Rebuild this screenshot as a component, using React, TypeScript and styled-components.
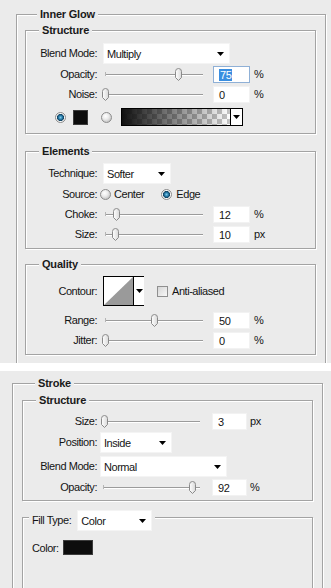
import React from "react";
import styled, { createGlobalStyle } from "styled-components";

const GlobalStyle = createGlobalStyle`
  html, body {
    margin: 0;
    padding: 0;
    background: #fff;
  }
  body {
    font-family: "Liberation Sans", Arial, sans-serif;
    font-size: 11px;
    letter-spacing: -0.45px;
    color: #141414;
  }
`;

const Page = styled.div`
  width: 331px;
  height: 588px;
  overflow: hidden;
  background: #fff;
  display: flex;
  flex-direction: column;
  gap: 8px;
`;

const Panel = styled.div<{ $h: number; $pt: number }>`
  flex: none;
  height: ${({ $h }) => $h}px;
  padding-top: ${({ $pt }) => $pt}px;
  box-sizing: border-box;
  overflow: hidden;
  background: #ebebeb;
`;

const Group = styled.div<{ $m: string; $p: string }>`
  margin: ${({ $m }) => $m};
  padding: ${({ $p }) => $p};
  border: 1px solid #a3a3a3;
  box-shadow: inset 1px 1px 0 #fff, 1px 1px 0 #fff;
`;

const Title = styled.div<{ $ml: number }>`
  width: fit-content;
  height: 14px;
  margin: -8px 0 0 ${({ $ml }) => $ml}px;
  padding: 0 3px;
  background: #ebebeb;
  font-weight: bold;
  line-height: 14px;
  letter-spacing: -0.2px;
  color: #1a1a1a;
`;

const FillLegend = styled.div`
  width: fit-content;
  height: 22px;
  margin: -9px 0 0 6px;
  padding: 0 3px;
  background: #ebebeb;
  display: flex;
  align-items: center;
  gap: 6px;
`;

const Row = styled.div<{ $h: number; $mt?: number; $gap?: number; $pl?: number }>`
  display: flex;
  align-items: center;
  height: ${({ $h }) => $h}px;
  margin-top: ${({ $mt }) => $mt ?? 0}px;
  padding-left: ${({ $pl }) => $pl ?? 0}px;
  gap: ${({ $gap }) => $gap ?? 0}px;
`;

const Label = styled.span<{ $w: number }>`
  flex: none;
  width: ${({ $w }) => $w}px;
  text-align: right;
  white-space: nowrap;
`;

const Select = styled.div<{ $w: number }>`
  flex: none;
  width: ${({ $w }) => $w}px;
  height: 21px;
  box-sizing: border-box;
  padding: 2px 5px 0 3px;
  background: #fff;
  border: 1px solid #f4f4f4;
  display: flex;
  align-items: center;
  justify-content: space-between;
`;

const Field = styled.div<{ $w: number; $focus?: boolean }>`
  flex: none;
  width: ${({ $w }) => $w}px;
  height: 17px;
  box-sizing: border-box;
  padding: 1px 0 0 5px;
  background: #fff;
  border: 1px solid ${({ $focus }) => ($focus ? "#8fb0d6" : "#f2f2f2")};
  line-height: 14px;
`;

const Selected = styled.span`
  background: #3a8ee0;
  color: #fff;
  padding: 0 1px;
`;

const Unit = styled.span<{ $ml: number }>`
  margin-left: ${({ $ml }) => $ml}px;
`;

const SliderBox = styled.div<{ $w: number }>`
  position: relative;
  flex: none;
  width: ${({ $w }) => $w}px;
  height: 16px;
`;

const Track = styled.div<{ $l: number; $w: number }>`
  position: absolute;
  left: ${({ $l }) => $l}px;
  width: ${({ $w }) => $w}px;
  top: 8px;
  height: 1px;
  background: #9b9b9b;
  box-shadow: 0 1px 0 #fff;
  &::before {
    content: "";
    position: absolute;
    left: 0;
    top: -2px;
    width: 1px;
    height: 4px;
    background: #b5b5b5;
  }
`;

const ThumbSvg = styled.svg`
  position: absolute;
  top: 2px;
`;

const Radio = styled.span<{ $on?: boolean }>`
  flex: none;
  width: 11px;
  height: 11px;
  box-sizing: border-box;
  border-radius: 50%;
  border: 1px solid #8c8c8c;
  background: ${({ $on }) =>
    $on
      ? "radial-gradient(circle at 50% 50%, #7ccbea 0, #2677a4 2px, #113f5c 3.3px, #fdfdfd 3.8px, #d2d2d2 6px)"
      : "radial-gradient(circle at 40% 35%, #ffffff 0, #ececec 3px, #c8c8c8 6px)"};
`;

const Swatch = styled.span<{ $w: number }>`
  flex: none;
  width: ${({ $w }) => $w}px;
  height: 15px;
  box-sizing: border-box;
  background: #0d0d0d;
  border: 1px solid #3c3c3c;
`;

const GradientBar = styled.div`
  flex: none;
  display: flex;
  width: 122px;
  height: 18px;
  box-sizing: border-box;
  border: 1px solid #000;
  background: #fff;
`;

const GradientFill = styled.div`
  flex: 1;
  background: linear-gradient(to right, #101010, rgba(16, 16, 16, 0.6) 40%, rgba(16, 16, 16, 0)),
    repeating-conic-gradient(#c4c4c4 0 25%, #fff 0 50%) 0 0 / 10px 10px;
`;

const ArrowCell = styled.div<{ $w: number }>`
  flex: none;
  width: ${({ $w }) => $w}px;
  border-left: 1px solid #000;
  background: #fff;
  display: flex;
  align-items: center;
  justify-content: center;
`;

const ContourBox = styled.div`
  flex: none;
  display: flex;
  width: 41px;
  height: 30px;
  box-sizing: border-box;
  border: 1px solid #000;
  background: #fff;
`;

const ContourPreview = styled.svg`
  flex: none;
  display: block;
`;

const Checkbox = styled.span`
  flex: none;
  width: 11px;
  height: 11px;
  box-sizing: border-box;
  border: 1px solid #8f8f8f;
  background: linear-gradient(135deg, #d6d6d6, #f8f8f8);
`;

const Gap = styled.span<{ $w: number }>`
  flex: none;
  width: ${({ $w }) => $w}px;
`;

const Arrow = () => (
  <svg width="7" height="4" viewBox="0 0 7 4">
    <path d="M0 0h7L3.5 4z" fill="#000" />
  </svg>
);

type SliderProps = { w: number; tl: number; tw: number; pos: number };

const Slider = ({ w, tl, tw, pos }: SliderProps) => (
  <SliderBox $w={w}>
    <Track $l={tl} $w={tw} />
    <ThumbSvg width="9" height="13" viewBox="0 0 9 13" style={{ left: tl + (pos / 100) * tw - 4.5 }}>
      <defs>
        <linearGradient id="tg" x1="0" x2="1">
          <stop offset="0" stopColor="#ffffff" />
          <stop offset="1" stopColor="#d9d9d9" />
        </linearGradient>
      </defs>
      <path d="M1.5 3.5 Q1.5 0.5 4.5 0.5 Q7.5 0.5 7.5 3.5 V9.5 L4.5 12.5 L1.5 9.5 Z" fill="url(#tg)" stroke="#8a8a8a" />
    </ThumbSvg>
  </SliderBox>
);

type ValueRowProps = {
  label: string;
  lw: number;
  pos: number;
  value: string;
  unit: string;
  mt?: number;
  wide?: boolean;
  focus?: boolean;
};

// two slider layouts: Inner Glow (wide) and Stroke
const ValueRow = ({ label, lw, pos, value, unit, mt, wide, focus }: ValueRowProps) => (
  <Row $h={20} $mt={mt}>
    <Label $w={lw}>{label}</Label>
    <Gap $w={wide ? 6 : 3} />
    {wide ? <Slider w={110} tl={2} tw={98} pos={pos} /> : <Slider w={112} tl={3} tw={97} pos={pos} />}
    <Field $w={wide ? 37 : 35} $focus={focus}>
      {focus ? <Selected>{value}</Selected> : value}
    </Field>
    <Unit $ml={wide ? 4 : 3}>{unit}</Unit>
  </Row>
);

const App = () => {
  return (
    <>
      <GlobalStyle />
      <Page>
        <Panel $h={363} $pt={14}>
          <Group $m="0 5px 0 16px" $p="0 9px 30px 8px">
            <Title $ml={12}>Inner Glow</Title>

            <Group $m="9px 0 0 0" $p="0 0 5px 0">
              <Title $ml={13}>Structure</Title>
              <Row $h={22} $mt={5} $gap={6}>
                <Label $w={71}>Blend Mode:</Label>
                <Select $w={127}>
                  <span>Multiply</span>
                  <Arrow />
                </Select>
              </Row>
              <ValueRow label="Opacity:" lw={71} pos={75} value="75" unit="%" wide focus />
              <ValueRow label="Noise:" lw={71} pos={1} value="0" unit="%" wide />
              <Row $h={22} $mt={2} $pl={29}>
                <Radio $on />
                <Gap $w={7} />
                <Swatch $w={15} />
                <Gap $w={13} />
                <Radio />
                <Gap $w={9} />
                <GradientBar>
                  <GradientFill />
                  <ArrowCell $w={11}>
                    <Arrow />
                  </ArrowCell>
                </GradientBar>
              </Row>
            </Group>

            <Group $m="17px 0 0 0" $p="0 0 4px 0">
              <Title $ml={13}>Elements</Title>
              <Row $h={22} $mt={4} $gap={6}>
                <Label $w={71}>Technique:</Label>
                <Select $w={68}>
                  <span>Softer</span>
                  <Arrow />
                </Select>
              </Row>
              <Row $h={20}>
                <Label $w={71}>Source:</Label>
                <Gap $w={3} />
                <Radio />
                <Gap $w={3} />
                <span>Center</span>
                <Gap $w={17} />
                <Radio $on />
                <Gap $w={4} />
                <span>Edge</span>
              </Row>
              <ValueRow label="Choke:" lw={71} pos={12} value="12" unit="%" wide />
              <ValueRow label="Size:" lw={71} pos={11} value="10" unit="px" wide />
            </Group>

            <Group $m="15px 0 0 0" $p="0 0 4px 0">
              <Title $ml={13}>Quality</Title>
              <Row $h={32} $mt={4}>
                <Label $w={71}>Contour:</Label>
                <Gap $w={6} />
                <ContourBox>
                  <ContourPreview width="29" height="28" viewBox="0 0 29 28">
                    <polygon points="0,28 29,0 29,28" fill="#9a9a9a" />
                  </ContourPreview>
                  <ArrowCell $w={10}>
                    <Arrow />
                  </ArrowCell>
                </ContourBox>
                <Gap $w={13} />
                <Checkbox />
                <Gap $w={4} />
                <span>Anti-aliased</span>
              </Row>
              <ValueRow label="Range:" lw={71} pos={50} value="50" unit="%" mt={3} wide />
              <ValueRow label="Jitter:" lw={71} pos={1} value="0" unit="%" wide />
            </Group>
          </Group>
        </Panel>

        <Panel $h={217} $pt={12}>
          <Group $m="0 8px 0 12px" $p="0 9px 80px 9px">
            <Title $ml={13}>Stroke</Title>

            <Group $m="10px 0 0 0" $p="0 0 3px 0">
              <Title $ml={13}>Structure</Title>
              <ValueRow label="Size:" lw={74} pos={2} value="3" unit="px" mt={4} />
              <Row $h={22} $gap={3}>
                <Label $w={74}>Position:</Label>
                <Select $w={72}>
                  <span>Inside</span>
                  <Arrow />
                </Select>
              </Row>
              <Row $h={22} $mt={2} $gap={3}>
                <Label $w={74}>Blend Mode:</Label>
                <Select $w={127}>
                  <span>Normal</span>
                  <Arrow />
                </Select>
              </Row>
              <ValueRow label="Opacity:" lw={74} pos={92} value="92" unit="%" />
            </Group>

            <Group $m="16px 0 0 0" $p="0 0 80px 0">
              <FillLegend>
                <span>Fill Type:</span>
                <Select $w={75}>
                  <span>Color</span>
                  <Arrow />
                </Select>
              </FillLegend>
              <Row $h={21} $mt={6} $pl={9} $gap={4}>
                <span>Color:</span>
                <Swatch $w={30} />
              </Row>
            </Group>
          </Group>
        </Panel>
      </Page>
    </>
  );
};

export default App;
